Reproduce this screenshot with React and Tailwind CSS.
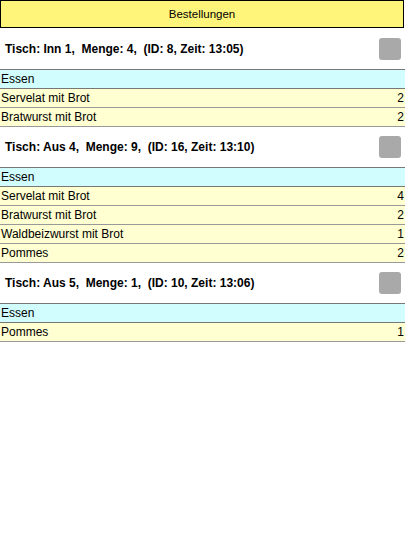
import React from "react";

const orders = [
  { tisch: "Inn 1", menge: 4, id: 8, zeit: "13:05", items: [["Servelat mit Brot", 2], ["Bratwurst mit Brot", 2]] },
  { tisch: "Aus 4", menge: 9, id: 16, zeit: "13:10", items: [["Servelat mit Brot", 4], ["Bratwurst mit Brot", 2], ["Waldbeizwurst mit Brot", 1], ["Pommes", 2]] },
  { tisch: "Aus 5", menge: 1, id: 10, zeit: "13:06", items: [["Pommes", 1]] },
];

export default function App() {
  return (
    <div className="w-[405px] h-[540px] bg-white text-black text-[12px] leading-[18px]" style={{ fontFamily: '"Liberation Sans", Arial, sans-serif' }}>
      <div className="w-[404px] h-[28px] bg-[#fff57a] border border-black flex items-center justify-center text-[11.5px]">Bestellungen</div>
      {orders.map((o, i) => (
        <div key={o.id}>
          <div className={(i === 0 ? "h-[41px]" : "h-[40px]") + " flex items-center justify-between pl-[5px] pr-[4px] font-bold"}>
            <span className="whitespace-pre">{`Tisch: ${o.tisch},  Menge: ${o.menge},  (ID: ${o.id}, Zeit: ${o.zeit})`}</span>
            <div className="w-[22px] h-[22px] rounded-[3px] bg-[#a9a9a9]" />
          </div>
          <div className="border-t border-[#777]">
            <div className="h-[19px] bg-[#d2fdff] border-b border-[#777] px-[1px] flex items-center">Essen</div>
            {o.items.map(([n, q]) => (
              <div key={n} className="h-[19px] bg-[#ffffd2] border-b border-[#999] px-[1px] flex items-center justify-between">
                <span>{n}</span>
                <span>{q}</span>
              </div>
            ))}
          </div>
        </div>
      ))}
    </div>
  );
}
